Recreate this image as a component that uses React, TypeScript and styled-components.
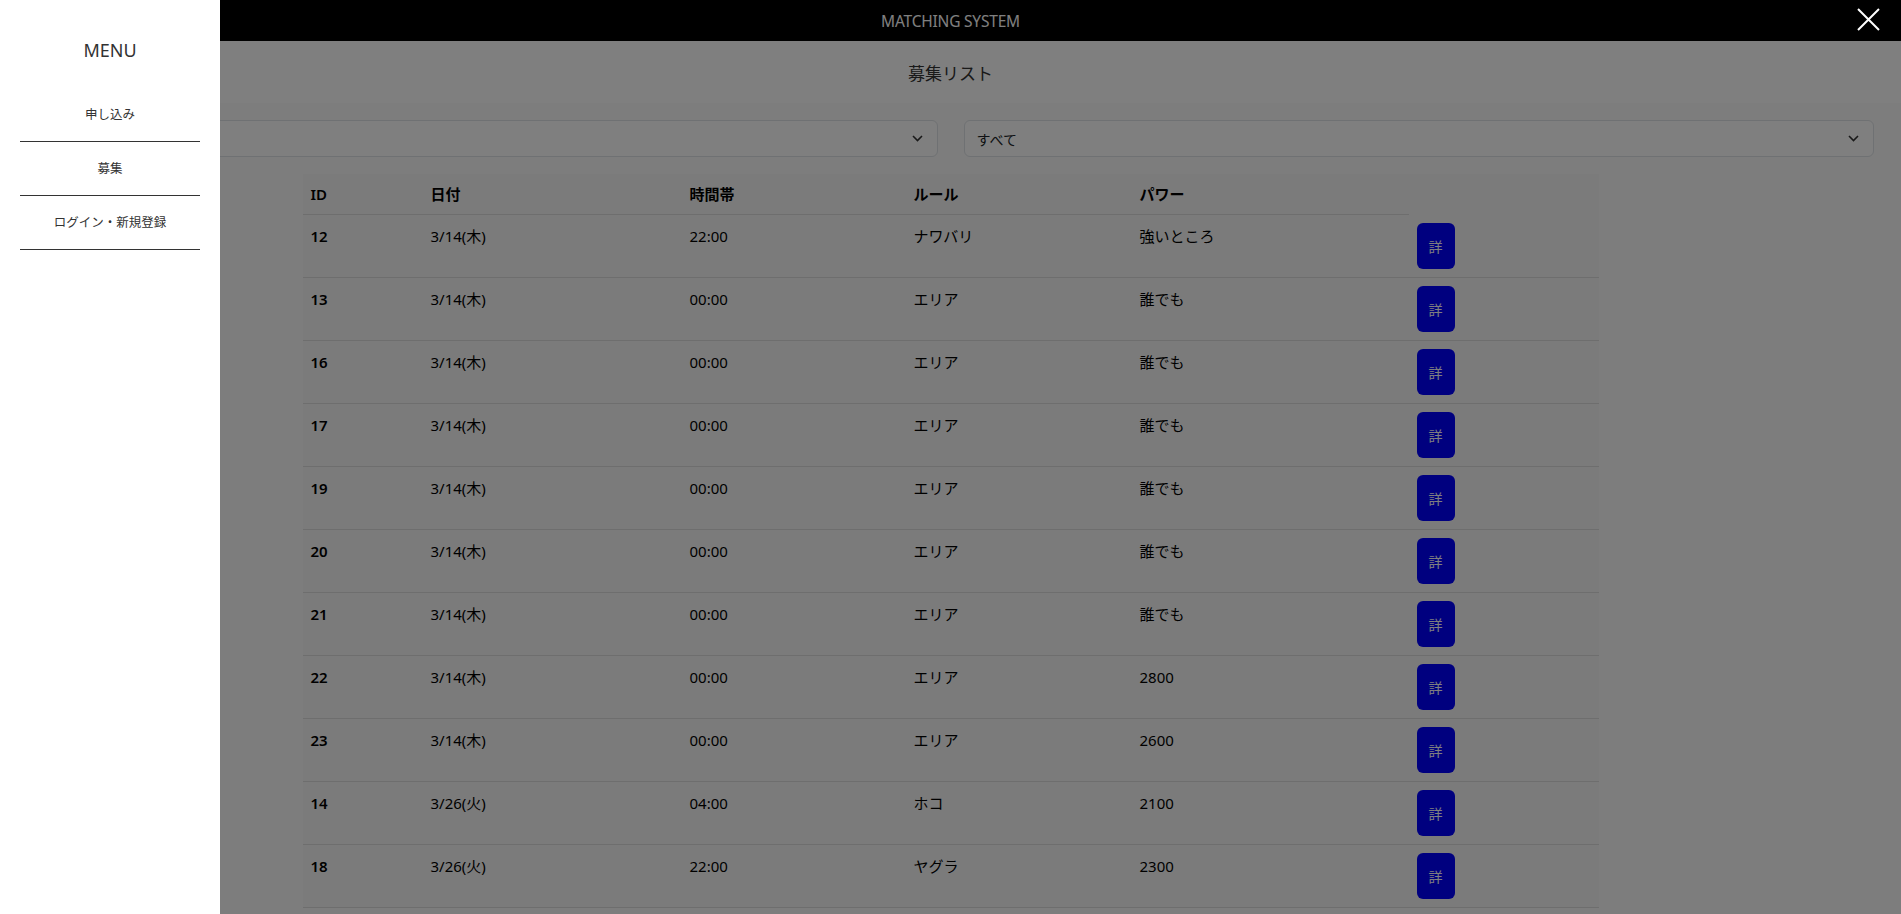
import styled, { createGlobalStyle } from "styled-components";

const GlobalStyle = createGlobalStyle`
  html, body {
    margin: 0;
    padding: 0;
    overflow: hidden;
    background: #fff;
    font-family: "Noto Sans", "Noto Sans CJK JP", sans-serif;
    color: #212529;
  }
  * { box-sizing: border-box; }
`;

const Page = styled.div`
  min-height: 100vh;
  background: #fbfbfb;
`;

const TopBar = styled.header`
  height: 41px;
  background: #000;
  display: flex;
  align-items: center;
  justify-content: center;
`;

const BarTitle = styled.span`
  color: #fff;
  font-size: 15.5px;
  letter-spacing: -0.2px;
`;

const TitleSection = styled.section`
  height: 62px;
  background: #fff;
  display: flex;
  align-items: center;
  justify-content: center;
`;

const PageTitle = styled.h1`
  margin: 0;
  font-size: 17px;
  font-weight: 400;
  color: #333;
`;

const Main = styled.main`
  padding: 17px 27px 0;
`;

const Filters = styled.div`
  display: grid;
  grid-template-columns: 1fr 1fr;
  gap: 26px;
  margin-bottom: 17px;
`;

const SelectBox = styled.div`
  height: 37px;
  border: 1px solid #dee2e6;
  border-radius: 6px;
  background: #fff;
  display: flex;
  align-items: center;
  justify-content: space-between;
  padding: 0 14px 0 12px;
  font-size: 14px;
  color: #212529;
`;

const Table = styled.table`
  width: 1296px;
  margin: 0 auto;
  border-collapse: collapse;
  table-layout: fixed;
  background: #f7f7f7;
  font-size: 15px;
  color: #000;
`;

const HeadCell = styled.th`
  text-align: left;
  font-weight: 600;
  padding: 8px 8px;
  line-height: 24px;
  border-bottom: 1px solid #dcdcdc;
`;

const Row = styled.tr`
  border-bottom: 1px solid #dcdcdc;
`;

const Cell = styled.td<{ $bold?: boolean }>`
  vertical-align: top;
  padding: 10px 8px;
  line-height: 22px;
  font-weight: ${(p) => (p.$bold ? 600 : 400)};
`;

const ActionCell = styled.td`
  vertical-align: top;
  padding: 8px 8px;
`;

const DetailButton = styled.button`
  width: 38px;
  height: 46px;
  border: none;
  border-radius: 6px;
  background: #0000ff;
  color: #fff;
  font-family: inherit;
  font-size: 14px;
  padding: 0;
`;

const Overlay = styled.div`
  position: fixed;
  inset: 0;
  background: rgba(0, 0, 0, 0.5);
  z-index: 10;
`;

const Drawer = styled.nav`
  position: fixed;
  top: 0;
  left: 0;
  bottom: 0;
  width: 220px;
  background: #fff;
  z-index: 20;
  padding: 36px 20px 0;
`;

const MenuTitle = styled.div`
  text-align: center;
  font-size: 18px;
  line-height: 28px;
  color: #333;
  margin-bottom: 24px;
`;

const MenuItem = styled.a`
  display: block;
  text-align: center;
  height: 54px;
  line-height: 53px;
  font-size: 12.5px;
  color: #333;
  border-bottom: 1px solid #333;
  text-decoration: none;
`;

const CloseButton = styled.button`
  position: fixed;
  top: 8px;
  right: 21px;
  width: 23px;
  height: 23px;
  padding: 0;
  border: none;
  background: none;
  z-index: 20;
  display: flex;
`;

type Entry = { id: number; date: string; time: string; rule: string; power: string };

const rows: Entry[] = [
  { id: 12, date: "3/14(木)", time: "22:00", rule: "ナワバリ", power: "強いところ" },
  { id: 13, date: "3/14(木)", time: "00:00", rule: "エリア", power: "誰でも" },
  { id: 16, date: "3/14(木)", time: "00:00", rule: "エリア", power: "誰でも" },
  { id: 17, date: "3/14(木)", time: "00:00", rule: "エリア", power: "誰でも" },
  { id: 19, date: "3/14(木)", time: "00:00", rule: "エリア", power: "誰でも" },
  { id: 20, date: "3/14(木)", time: "00:00", rule: "エリア", power: "誰でも" },
  { id: 21, date: "3/14(木)", time: "00:00", rule: "エリア", power: "誰でも" },
  { id: 22, date: "3/14(木)", time: "00:00", rule: "エリア", power: "2800" },
  { id: 23, date: "3/14(木)", time: "00:00", rule: "エリア", power: "2600" },
  { id: 14, date: "3/26(火)", time: "04:00", rule: "ホコ", power: "2100" },
  { id: 18, date: "3/26(火)", time: "22:00", rule: "ヤグラ", power: "2300" },
];

const Chevron = () => (
  <svg width="11" height="7" viewBox="0 0 11 7" fill="none">
    <path d="M1 1l4.5 4.5L10 1" stroke="#333" strokeWidth="1.6" />
  </svg>
);

export default function App() {
  return (
    <>
      <GlobalStyle />
      <Page>
        <TopBar>
          <BarTitle>MATCHING SYSTEM</BarTitle>
        </TopBar>
        <TitleSection>
          <PageTitle>募集リスト</PageTitle>
        </TitleSection>
        <Main>
          <Filters>
            <SelectBox>
              <span>すべて</span>
              <Chevron />
            </SelectBox>
            <SelectBox>
              <span>すべて</span>
              <Chevron />
            </SelectBox>
          </Filters>
          <Table>
            <colgroup>
              <col style={{ width: 120 }} />
              <col style={{ width: 259 }} />
              <col style={{ width: 224 }} />
              <col style={{ width: 226 }} />
              <col style={{ width: 277 }} />
              <col style={{ width: 190 }} />
            </colgroup>
            <thead>
              <tr>
                <HeadCell>ID</HeadCell>
                <HeadCell>日付</HeadCell>
                <HeadCell>時間帯</HeadCell>
                <HeadCell>ルール</HeadCell>
                <HeadCell>パワー</HeadCell>
              </tr>
            </thead>
            <tbody>
              {rows.map((r) => (
                <Row key={r.id}>
                  <Cell $bold>{r.id}</Cell>
                  <Cell>{r.date}</Cell>
                  <Cell>{r.time}</Cell>
                  <Cell>{r.rule}</Cell>
                  <Cell>{r.power}</Cell>
                  <ActionCell>
                    <DetailButton>詳</DetailButton>
                  </ActionCell>
                </Row>
              ))}
            </tbody>
          </Table>
        </Main>
      </Page>
      <Overlay />
      <Drawer>
        <MenuTitle>MENU</MenuTitle>
        <MenuItem href="#">申し込み</MenuItem>
        <MenuItem href="#">募集</MenuItem>
        <MenuItem href="#">ログイン・新規登録</MenuItem>
      </Drawer>
      <CloseButton aria-label="close">
        <svg width="23" height="23" viewBox="0 0 23 23">
          <path d="M1 1L22 22M22 1L1 22" stroke="#fff" strokeWidth="2" />
        </svg>
      </CloseButton>
    </>
  );
}
